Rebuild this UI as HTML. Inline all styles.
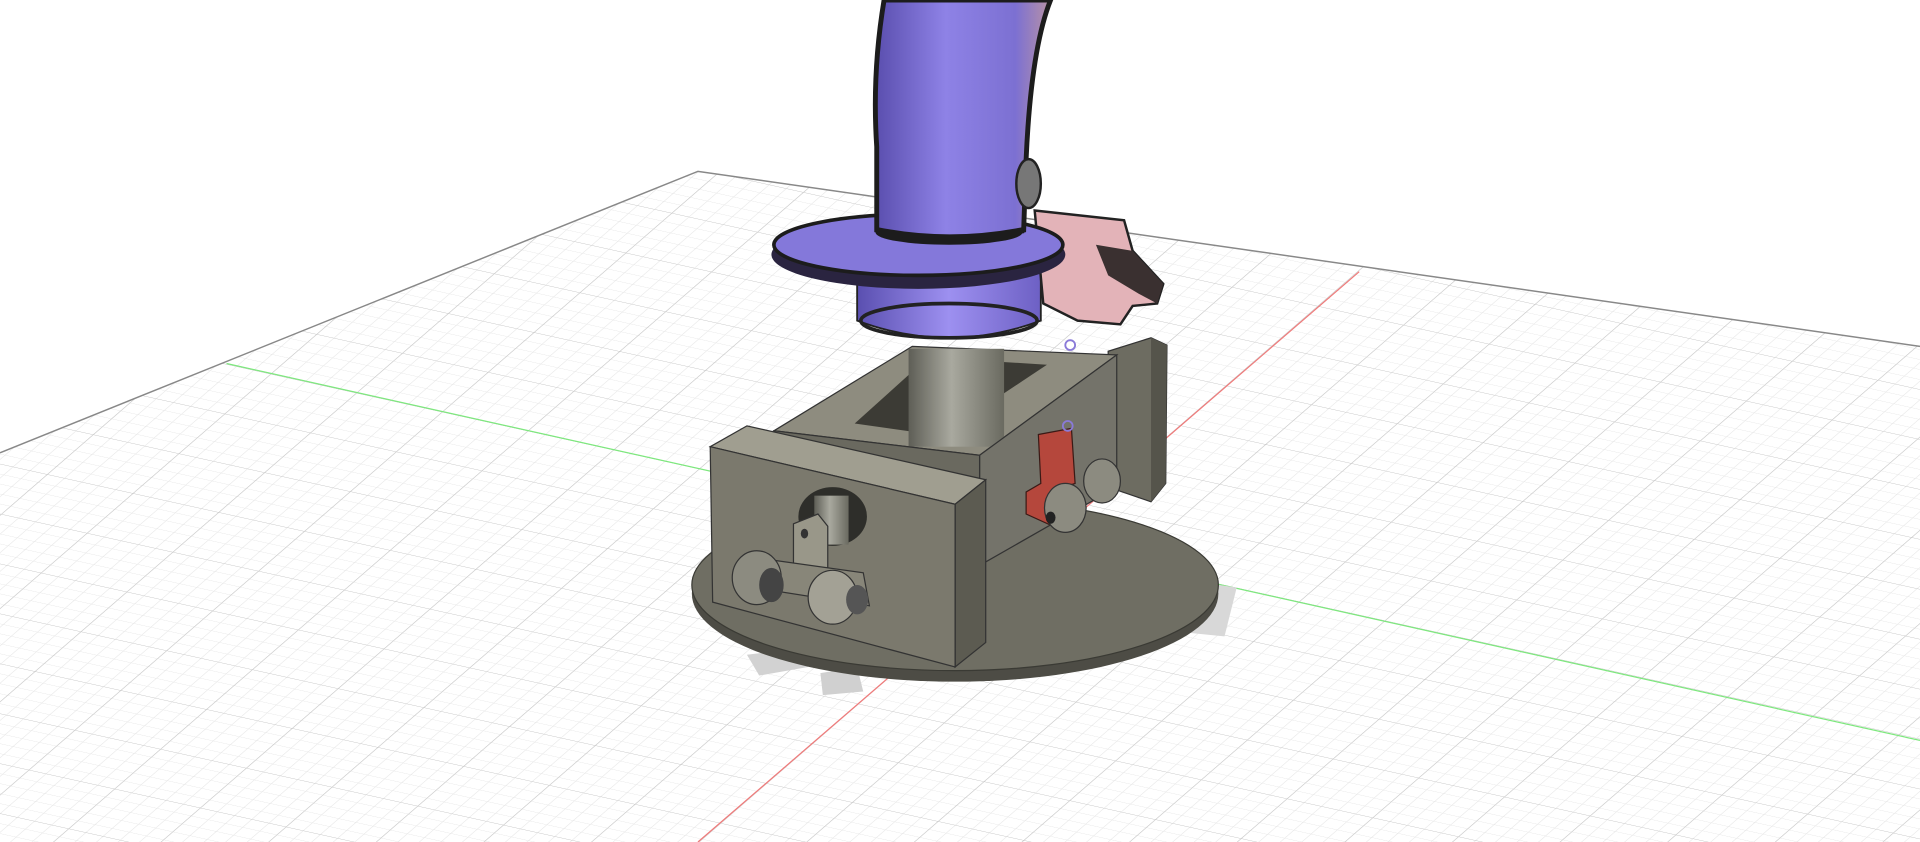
<!DOCTYPE html>
<html><head><meta charset="utf-8"><style>
html,body{margin:0;padding:0;background:#fff;overflow:hidden}
svg{display:block}
</style></head><body>
<svg width="1920" height="842" viewBox="0 0 1568 688" preserveAspectRatio="none" xmlns="http://www.w3.org/2000/svg">
<defs>
<pattern id="minor" width="10" height="10" patternUnits="userSpaceOnUse" patternTransform="matrix(1.4 0.31 -0.75 0.65 851 445)">
<path d="M0 0H10M0 0V10" stroke="#e6e6e6" stroke-width="0.8" fill="none"/>
</pattern>
<pattern id="major" width="50" height="50" patternUnits="userSpaceOnUse" patternTransform="matrix(1.4 0.31 -0.75 0.65 851 445)">
<path d="M0 0H50M0 0V50" stroke="#c8c8c8" stroke-width="0.8" fill="none"/>
</pattern>
<clipPath id="floor"><polygon points="570,140 1568,283 1568,688 0,688 0,370"/></clipPath>
<linearGradient id="col" x1="0" x2="1"><stop offset="0" stop-color="#5e5e56"/><stop offset=".45" stop-color="#a9a99f"/><stop offset="1" stop-color="#6a6a60"/></linearGradient>
<linearGradient id="tube" x1="0" x2="1"><stop offset="0" stop-color="#5a4eae"/><stop offset=".4" stop-color="#8e82e6"/><stop offset=".8" stop-color="#7c70d2"/><stop offset="1" stop-color="#b892a6"/></linearGradient>
<linearGradient id="cyl" x1="0" x2="1"><stop offset="0" stop-color="#5a4fb0"/><stop offset=".5" stop-color="#9d90f0"/><stop offset="1" stop-color="#6d60c4"/></linearGradient>
</defs>
<rect width="1568" height="688" fill="#fff"/>
<g clip-path="url(#floor)">
<rect x="0" y="0" width="1568" height="688" fill="url(#minor)"/>
<rect x="0" y="0" width="1568" height="688" fill="url(#major)"/>
</g>
<polyline points="0,370 570,140 1568,283" fill="none" stroke="#888" stroke-width="1.2"/>
<line x1="185" y1="297" x2="1568" y2="605" stroke="#7de87d" stroke-width="1"/>
<line x1="1110" y1="222" x2="570" y2="688" stroke="#f07a7a" stroke-width="1"/>
<polygon points="610,535 650,530 660,545 620,552" fill="#d2d2d2"/>
<polygon points="670,550 700,545 705,565 672,568" fill="#d0d0d0"/>
<polygon points="940,470 1010,480 1000,520 950,515" fill="#d8d8d8"/>
<ellipse cx="780" cy="485" rx="215" ry="72" fill="#4d4c45"/>
<ellipse cx="780" cy="478" rx="215" ry="70" fill="#6f6e63" stroke="#3a3a34" stroke-width="1"/>
<polygon points="905,287 940,276 953,282 952,395 940,410 905,398" fill="#6d6c61" stroke="#333" stroke-width="1"/>
<polygon points="940,276 953,282 952,395 940,410" fill="#55544b"/>
<polygon points="632,352 745,283 912,290 800,372" fill="#8e8c7f" stroke="#333" stroke-width="1"/>
<polygon points="698,346 758,292 855,298 768,356" fill="#3c3b35"/>
<rect x="742" y="285" width="78" height="80" fill="url(#col)"/>
<polygon points="800,372 912,290 912,398 800,462" fill="#74736a" stroke="#333" stroke-width="1"/>
<polygon points="632,352 800,372 800,462 632,440" fill="#6a695f" stroke="#333" stroke-width="1"/>
<polygon points="848,355 875,350 878,395 862,400 860,430 838,420 838,402 850,395" fill="#b5473c" stroke="#3a1a16" stroke-width="1"/>
<ellipse cx="870" cy="415" rx="17" ry="20" fill="#8c8b80" stroke="#333"/>
<ellipse cx="858" cy="423" rx="4" ry="5" fill="#222"/>
<ellipse cx="900" cy="393" rx="15" ry="18" fill="#8c8b80" stroke="#333"/>
<polygon points="580,365 610,348 805,392 780,412" fill="#a09e90" stroke="#333" stroke-width="1"/>
<polygon points="780,412 805,392 805,525 780,545" fill="#5c5b51" stroke="#333" stroke-width="1"/>
<polygon points="580,365 780,412 780,545 582,492" fill="#7b796d" stroke="#333" stroke-width="1"/>
<ellipse cx="680" cy="422" rx="28" ry="24" fill="#2e2e2a"/>
<rect x="665" y="405" width="28" height="40" fill="url(#col)"/>
<polygon points="648,428 668,420 676,430 676,478 656,485 648,470" fill="#999789" stroke="#333"/>
<ellipse cx="657" cy="436" rx="3" ry="4" fill="#333"/>
<polygon points="612,455 705,468 710,495 615,480" fill="#888679" stroke="#333"/>
<ellipse cx="618" cy="472" rx="20" ry="22" fill="#8c8b80" stroke="#333"/>
<ellipse cx="630" cy="478" rx="10" ry="14" fill="#444"/>
<ellipse cx="680" cy="488" rx="20" ry="22" fill="#a3a195" stroke="#333"/>
<ellipse cx="700" cy="490" rx="9" ry="12" fill="#555"/>
<path d="M700,215 L850,215 L850,262 Q775,290 700,262 Z" fill="url(#cyl)" stroke="#222" stroke-width="1.5"/>
<ellipse cx="775" cy="262" rx="72" ry="14" fill="none" stroke="#222" stroke-width="3"/>
<polygon points="845,172 918,180 925,205 950,232 945,248 925,250 915,265 880,262 852,248" fill="#e3b3b8" stroke="#222" stroke-width="2"/>
<polygon points="895,200 925,205 950,232 945,248 930,240 905,225" fill="#3a3030"/>
<ellipse cx="750" cy="208" rx="120" ry="28" fill="#2a2440"/>
<ellipse cx="750" cy="200" rx="118" ry="25" fill="#8478da" stroke="#1c1c1c" stroke-width="3"/>
<ellipse cx="775" cy="190" rx="60" ry="10" fill="#1c1c1c"/>
<path d="M722,0 Q712,60 716,120 L716,188 Q775,200 836,188 L838,130 Q842,40 858,0 Z" fill="url(#tube)" stroke="#1c1c1c" stroke-width="4"/>
<path d="M716,188 Q775,200 836,188" fill="none" stroke="#1c1c1c" stroke-width="5"/>
<ellipse cx="840" cy="150" rx="10" ry="20" fill="#777" stroke="#222" stroke-width="2"/>
<circle cx="874" cy="282" r="4" fill="none" stroke="#8a7ad8" stroke-width="1.5"/>
<circle cx="872" cy="348" r="4" fill="none" stroke="#8a7ad8" stroke-width="1.5"/>
</svg>
</body></html>
